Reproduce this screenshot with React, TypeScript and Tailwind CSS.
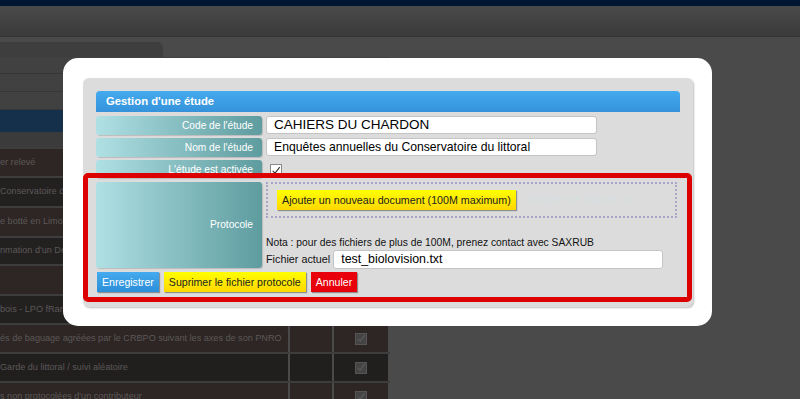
import React from 'react';

const bgRows = [
  { text: 'er relevé', h: 'h-[29px]', tone: 'bg-[#2d2624]' },
  { text: 'Conservatoire du littoral', h: 'h-[30px]', tone: 'bg-[#232020]' },
  { text: 'e botté en Limousin', h: 'h-[30px]', tone: 'bg-[#2d2624]' },
  { text: "nmation d'un Dépt", h: 'h-[28px]', tone: 'bg-[#232020]' },
  { text: '', h: 'h-[30px]', tone: 'bg-[#2d2624]' },
  { text: 'bois - LPO fRance', h: 'h-[29px]', tone: 'bg-[#232020]' },
  { text: 'és de baguage agréées par le CRBPO suivant les axes de son PNRO', h: 'h-[29px]', tone: 'bg-[#2d2624]', check: true },
  { text: 'Garde du littoral / suivi aléatoire', h: 'h-[29px]', tone: 'bg-[#211e1e]', check: true },
  { text: "s non protocolées d'un contributeur", h: 'h-[29px]', tone: 'bg-[#2d2624]', check: true },
];

function Check({ dim }: { dim?: boolean }) {
  return (
    <span
      className={`flex h-[12px] w-[12px] shrink-0 items-center justify-center border ${
        dim ? 'border-[#555] bg-[#444]' : 'border-[#888] bg-white'
      }`}
    >
      <svg viewBox="0 0 12 12" className="h-[11px] w-[11px]">
        <path d="M2 6.5 L4.8 9.2 L10.5 2" fill="none" stroke={dim ? '#5c5c5c' : '#333'} strokeWidth="1.3" />
      </svg>
    </span>
  );
}

function Label({ children, className = '' }: { children?: React.ReactNode; className?: string }) {
  return (
    <div
      className={`flex w-[166px] shrink-0 justify-end rounded-[3px] bg-gradient-to-r from-[#afe0e4] to-[#5e9c9f] pr-[9px] text-[10.2px] text-white shadow-[1px_1px_1px_rgba(0,0,0,0.15)] ${className}`}
    >
      {children}
    </div>
  );
}

const btn = 'h-[20px] px-[5px] whitespace-nowrap leading-[20px] shadow-[1px_1px_1px_rgba(0,0,0,0.35)]';

export default function App() {
  return (
    <div className="relative h-[399px] w-[800px] overflow-hidden bg-[#4a4a4a] font-['Liberation_Sans',Arial,sans-serif]">
      {/* page behind the overlay */}
      <div className="h-[6px] bg-[#001632]" />
      <div className="h-[31px] border-b border-[#333] bg-gradient-to-b from-[#4a4a4a] to-[#3b3b3b]" />
      <div className="w-[390px] pt-[5px]">
        <div className="h-[15px] w-[163px] rounded-tr-[6px] bg-[#3e3e3e]" />
        <div className="h-[17px] border-b border-[#363636] bg-[#414141]" />
        <div className="h-[18px] border-b border-[#363636] bg-[#414141]" />
        <div className="h-[18px] border-b border-[#363636] bg-[#414141]" />
        <div className="h-[22px] bg-[#14304a]" />
        <div className="h-[17px] border-b-2 border-[#3d3d3d] bg-[#3b3b3b]" />
        {bgRows.map((r, i) => (
          <div key={i} className={`flex border-b-2 border-[#3d3d3d] ${r.h}`}>
            <div className={`flex w-[288px] items-center overflow-hidden whitespace-nowrap text-[9.1px] text-[#5c5858] ${r.tone}`}>
              <span>{r.text}</span>
            </div>
            <div className={`ml-[2px] w-[42px] ${r.tone}`} />
            <div className={`ml-[2px] flex w-[54px] items-center justify-center ${r.tone}`}>
              {r.check && <Check dim />}
            </div>
          </div>
        ))}
      </div>

      {/* modal */}
      <div className="absolute left-[63px] top-[58px] h-[268px] w-[649px] rounded-[15px] bg-white p-[20px]">
        <div className="relative h-[229px] w-[610px] rounded-[6px] bg-[#dcdcdc] px-[13px] pt-[13px] shadow-[1px_1px_2px_rgba(0,0,0,0.25)]">
          <div className="flex h-[21px] w-[584px] items-center rounded-t-[4px] bg-gradient-to-b from-[#44aaee] to-[#3592da] pl-[10px] text-[11.3px] font-bold text-white">
            Gestion d'une étude
          </div>

          <div className="mt-[4px] flex h-[19px] gap-[4px]">
            <Label className="items-center">Code de l'étude</Label>
            <div className="flex h-[18px] w-[331px] items-center rounded-[3px] border border-[#c4c4c4] bg-white pl-[7px] text-[13.5px] text-black">
              CAHIERS DU CHARDON
            </div>
          </div>
          <div className="mt-[3px] flex h-[19px] gap-[4px]">
            <Label className="items-center">Nom de l'étude</Label>
            <div className="flex h-[18px] w-[331px] items-center rounded-[3px] border border-[#c4c4c4] bg-white pl-[7px] text-[12.2px] text-black">
              Enquêtes annuelles du Conservatoire du littoral
            </div>
          </div>
          <div className="mt-[3px] flex h-[18px] items-start gap-[8px]">
            <Label className="h-[18px] items-end pb-[1px]">L'étude est activée</Label>
            <div className="pt-[4px]">
              <Check />
            </div>
          </div>

          <div className="mt-[4px] flex gap-[4px]">
            <Label className="h-[86px] items-center pb-[1px]">Protocole</Label>
            <div className="flex w-[411px] flex-col">
              <div className="flex h-[36px] items-center gap-[11px] border-2 border-dotted border-[#aaa4c8] pl-[9px]">
                <div className={`${btn} bg-gradient-to-b from-[#ffff00] to-[#ffd700] text-[10.7px] text-[#222]`}>
                  Ajouter un nouveau document (100M maximum)
                </div>
                <span className="text-[10.5px] tracking-[1px] text-[#d5dee1]">Glisser le fichier ici</span>
              </div>
              <div className="mt-[18px] text-[10.3px] leading-[14px] text-[#111]">
                Nota : pour des fichiers de plus de 100M, prenez contact avec SAXRUB
              </div>
              <div className="flex items-center gap-[3px]">
                <span className="text-[10.8px] text-[#111]">Fichier actuel</span>
                <div className="flex h-[19px] w-[330px] items-center rounded-[3px] border border-[#c4c4c4] bg-white pl-[7px] text-[12.4px] text-black">
                  test_biolovision.txt
                </div>
              </div>
            </div>
          </div>

          <div className="mt-[3px] flex gap-[5px] pl-[1px] text-[10.6px]">
            <div className={`${btn} bg-gradient-to-b from-[#45aaee] to-[#2b8ed8] text-white`}>Enregistrer</div>
            <div className={`${btn} bg-gradient-to-b from-[#ffff00] to-[#ffd700] text-[#222]`}>Suprimer le fichier protocole</div>
            <div className={`${btn} bg-[#e8000b] text-white`}>Annuler</div>
          </div>

          {/* highlight frame */}
          <div className="pointer-events-none absolute left-0 top-[95px] h-[129px] w-[609px] rounded-[5px] border-[5px] border-[#dd0000]" />
        </div>
      </div>
    </div>
  );
}
